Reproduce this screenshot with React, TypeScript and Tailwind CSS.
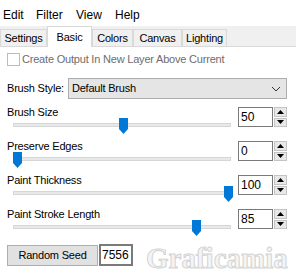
import React from 'react'

const font = { fontFamily: '"Liberation Sans", Arial, sans-serif' }

function Spin({ value }: { value: string }) {
  return (
    <div className="mt-[2px] flex h-[20px] w-[49px]">
      <div className="flex h-full w-[35px] items-center border border-[#7a7a7a] bg-white pl-[2px] text-[12px] tracking-normal text-black">
        {value}
      </div>
      <div className="ml-[1px] flex h-full w-[13px] flex-col gap-[1px]">
        <div className="flex flex-1 items-center justify-center border border-[#c4c4c4] bg-[#e8e8e8]">
          <svg width="7" height="4" viewBox="0 0 7 4">
            <path d="M0 4 L3.5 0 L7 4 Z" fill="#000" />
          </svg>
        </div>
        <div className="flex flex-1 items-center justify-center border border-[#c4c4c4] bg-[#e8e8e8]">
          <svg width="7" height="4" viewBox="0 0 7 4">
            <path d="M0 0 L3.5 4 L7 0 Z" fill="#000" />
          </svg>
        </div>
      </div>
    </div>
  )
}

function Slider({ pos }: { pos: number }) {
  return (
    <div className="relative h-[16px] w-[218px]">
      <div className="absolute left-0 right-0 top-[5px] h-[4px] border border-[#d6d6d6] bg-[#e7eaea]" />
      <div className="absolute top-0" style={{ left: pos }}>
        <svg width="9" height="16" viewBox="0 0 9 16">
          <path d="M0 0 H9 V11 L4.5 16 L0 11 Z" fill="#0078d7" />
        </svg>
      </div>
    </div>
  )
}

function Row({ label, value, pos }: { label: string; value: string; pos: number }) {
  return (
    <div className="flex h-[29px] flex-col">
      <div className="flex h-[22px] items-start justify-between">
        <div className="text-[11px] leading-[14px] tracking-[-0.2px]">{label}</div>
        <Spin value={value} />
      </div>
      <div className="-mt-[9px] pl-[6px]">
        <Slider pos={pos} />
      </div>
    </div>
  )
}

export default function App() {
  const tabs = [
    { t: 'Settings', w: 'w-[47px]' },
    { t: 'Basic', w: 'w-[45px]' },
    { t: 'Colors', w: 'w-[41px]' },
    { t: 'Canvas', w: 'w-[49px]' },
    { t: 'Lighting', w: 'w-[45px]' },
  ]
  return (
    <div className="relative h-[274px] w-[296px] overflow-hidden bg-[#f0f0f0] text-black" style={font}>
      <div className="flex h-[26px] items-center bg-white pl-[3px] pt-[4px] text-[12px]">
        <span className="w-[33px]">Edit</span>
        <span className="w-[40px]">Filter</span>
        <span className="w-[39px]">View</span>
        <span>Help</span>
      </div>
      <div className="flex h-[20px] items-end text-[11px] tracking-[-0.2px]">
        {tabs.map(({ t, w }) =>
          t === 'Basic' ? (
            <div
              key={t}
              className={'relative z-10 -mb-[1px] flex h-[21px] items-center justify-center border border-b-0 border-[#d9d9d9] bg-white ' + w}
            >
              {t}
            </div>
          ) : (
            <div
              key={t}
              className={'flex h-[17px] items-center justify-center border border-b-0 border-[#d9d9d9] bg-[#f0f0f0] ' + w}
            >
              {t}
            </div>
          )
        )}
      </div>
      <div className="h-[228px] border-t border-[#d9d9d9] bg-white pl-[7px] pr-[9px] pt-[4px] text-[11px] tracking-[-0.2px]">
        <div className="flex h-[16px] items-center gap-[2px] text-[#6d6d6d]">
          <div className="h-[13px] w-[13px] border border-[#bcbcbc] bg-white" />
          <span>Create Output In New Layer Above Current</span>
        </div>
        <div className="mt-[11px] flex items-center gap-[4px]">
          <span>Brush Style:</span>
          <div className="flex h-[21px] flex-1 items-center justify-between border border-[#adadad] bg-[#e5e5e5] pl-[3px] pr-[5px]">
            <span>Default Brush</span>
            <svg width="10" height="6" viewBox="0 0 10 6">
              <path d="M1 1 L5 5 L9 1" stroke="#333" fill="none" strokeWidth="1" />
            </svg>
          </div>
        </div>
        <div className="mt-[6px] flex flex-col gap-[5px]">
          <Row label="Brush Size" value="50" pos={106} />
          <Row label="Preserve Edges" value="0" pos={0} />
          <Row label="Paint Thickness" value="100" pos={211} />
          <Row label="Paint Stroke Length" value="85" pos={179} />
        </div>
        <div className="mt-[8px] flex items-center">
          <div className="flex h-[21px] w-[91px] items-center justify-center border border-[#adadad] bg-[#e1e1e1]">
            Random Seed
          </div>
          <div className="ml-[1px] flex h-[22px] w-[34px] items-center border-2 border-[#7a7a7a] bg-white pl-[1px] text-[12px] tracking-normal">
            7556
          </div>
        </div>
      </div>
      <div
        className="pointer-events-none absolute left-[146px] top-[243px] text-[29px] font-bold leading-[30px] text-[#f4f4f4]"
        style={{ fontFamily: '"Liberation Serif", serif', WebkitTextStroke: '1px #d4d4d4' }}
      >
        Graficamia
      </div>
    </div>
  )
}
